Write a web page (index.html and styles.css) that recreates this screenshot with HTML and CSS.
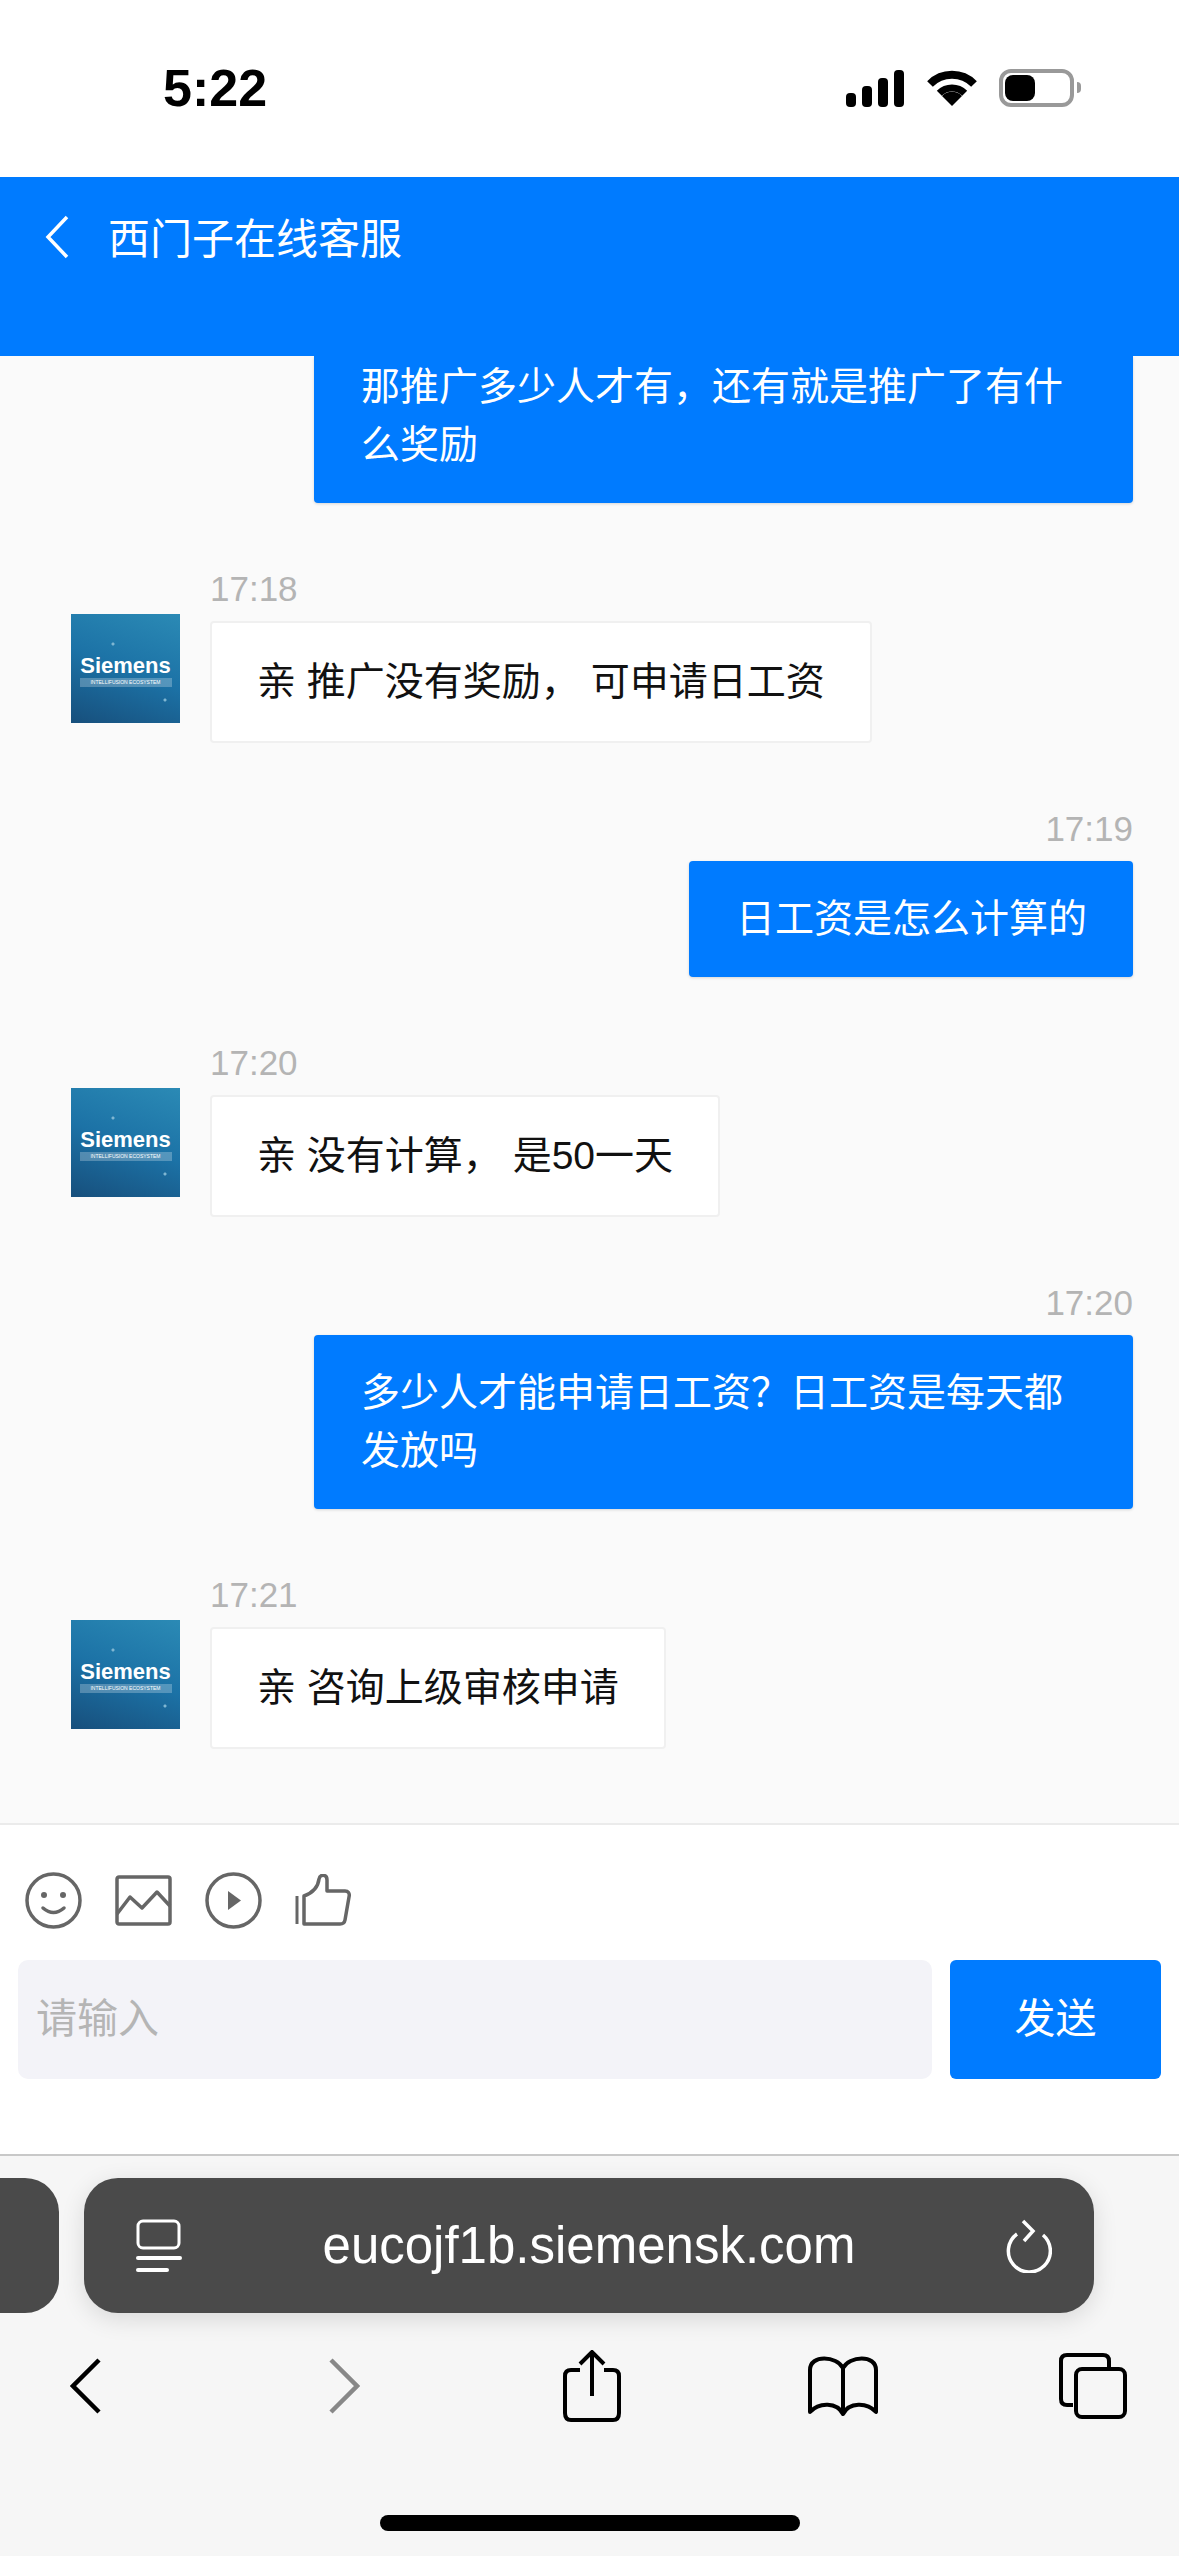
FILE: index.html
```html
<!DOCTYPE html>
<html lang="zh-CN">
<head>
  <meta charset="UTF-8" />
  <meta name="viewport" content="width=device-width, initial-scale=1.0"/>
  <title>西门子在线客服</title>
  <link rel="stylesheet" href="styles.css">
</head>
<body>
  <div class="status-bar">
    <span class="status-time">5:22</span>
    <div class="status-icons">
      <div class="signal">
        <i class="bar-1"></i><i class="bar-2"></i><i class="bar-3"></i><i class="bar-4"></i>
      </div>
      <svg class="wifi" width="50" height="38" viewBox="0 0 50 38">
        <path d="M3 15A31 31 0 0 1 47 15" fill="none" stroke="#000" stroke-width="8"/>
        <path d="M12.3 24.3A18 18 0 0 1 37.7 24.3" fill="none" stroke="#000" stroke-width="7"/>
        <path d="M25 37L15 27A14 14 0 0 1 35 27Z" fill="#000"/>
      </svg>
      <div class="battery"><div class="battery-fill"></div></div>
      <div class="battery-nub"></div>
    </div>
  </div>

  <header class="chat-header">
    <svg class="header-back" width="26" height="44" viewBox="0 0 26 44">
      <path d="M23 2L4 22L23 42" fill="none" stroke="#fff" stroke-width="3.5"/>
    </svg>
    <span class="header-title">西门子在线客服</span>
  </header>

  <main class="messages">
    <div class="msg-right">
      <div class="bubble bubble-me bubble-first">那推广多少人才有，还有就是推广了有什么奖励</div>
    </div>

    <div class="msg-left">
      <div class="avatar"><span class="avatar-name">Siemens</span><span class="avatar-sub">INTELLIFUSION ECOSYSTEM</span></div>
      <div class="msg-body">
        <div class="msg-time">17:18</div>
        <div class="bubble bubble-them">亲 推广没有奖励， 可申请日工资</div>
      </div>
    </div>

    <div class="msg-right">
      <div class="msg-time">17:19</div>
      <div class="bubble bubble-me">日工资是怎么计算的</div>
    </div>

    <div class="msg-left">
      <div class="avatar"><span class="avatar-name">Siemens</span><span class="avatar-sub">INTELLIFUSION ECOSYSTEM</span></div>
      <div class="msg-body">
        <div class="msg-time">17:20</div>
        <div class="bubble bubble-them">亲 没有计算， 是50一天</div>
      </div>
    </div>

    <div class="msg-right">
      <div class="msg-time">17:20</div>
      <div class="bubble bubble-me">多少人才能申请日工资？日工资是每天都发放吗</div>
    </div>

    <div class="msg-left">
      <div class="avatar"><span class="avatar-name">Siemens</span><span class="avatar-sub">INTELLIFUSION ECOSYSTEM</span></div>
      <div class="msg-body">
        <div class="msg-time">17:21</div>
        <div class="bubble bubble-them">亲 咨询上级审核申请</div>
      </div>
    </div>
  </main>

  <section class="composer">
    <div class="tools">
      <svg width="57" height="57" viewBox="0 0 57 57" fill="none" stroke="#666" stroke-width="3.5">
        <circle cx="28.5" cy="28.5" r="26.5"/>
        <circle cx="19" cy="23" r="3" fill="#666" stroke="none"/>
        <circle cx="38" cy="23" r="3" fill="#666" stroke="none"/>
        <path d="M18 36Q28.5 45 39 36" stroke-linecap="round"/>
      </svg>
      <svg width="57" height="51" viewBox="0 0 57 51" fill="none" stroke="#666" stroke-width="3.5" stroke-linejoin="round">
        <rect x="2" y="2" width="53" height="47" rx="2"/>
        <path d="M2 39L15 22L27 33L42 17L55 31"/>
      </svg>
      <svg width="57" height="57" viewBox="0 0 57 57" fill="none" stroke="#666" stroke-width="3.5">
        <circle cx="28.5" cy="28.5" r="26.5"/>
        <path d="M23 19L36 28.5L23 38Z" fill="#666" stroke="none"/>
      </svg>
      <svg width="56" height="52" viewBox="0 0 56 52" fill="none" stroke="#666" stroke-width="3.5" stroke-linejoin="round">
        <path d="M2 22V50" stroke-width="3"/>
        <path d="M9 22C17 19 23 14 24 5C25 0 32 0 32 6V17H50C53 17 55 19 54 23L50 46C49.500 49 48 50 45 50H9Z"/>
      </svg>
    </div>
    <div class="input-row">
      <div class="fake-input">请输入</div>
      <div class="send-btn">发送</div>
    </div>
  </section>

  <footer class="browser">
    <div class="url-row">
      <div class="prev-tab"></div>
      <div class="url-pill">
        <svg width="46" height="54" viewBox="0 0 46 54" fill="none" stroke="#fff">
          <rect x="2" y="2" width="41" height="27" rx="5" stroke-width="3"/>
          <path d="M2 39H44" stroke-width="4" stroke-linecap="round"/>
          <path d="M2 51H31" stroke-width="4" stroke-linecap="round"/>
        </svg>
        <span class="url-text">eucojf1b.siemensk.com</span>
        <svg width="48" height="54" viewBox="0 0 48 54" fill="none" stroke="#fff" stroke-width="3.5">
          <path d="M13 15A21 21 0 1 0 39 16"/>
          <path d="M19 2L29 12L20 22"/>
        </svg>
      </div>
    </div>
    <nav class="browser-nav">
      <svg width="32" height="56" viewBox="0 0 32 56" fill="none" stroke="#000" stroke-width="4.500">
        <path d="M29 2L3 28L29 54"/>
      </svg>
      <svg class="nav-forward" width="32" height="56" viewBox="0 0 32 56" fill="none" stroke="#888" stroke-width="4.500">
        <path d="M3 2L29 28L3 54"/>
      </svg>
      <svg class="nav-share" width="58" height="72" viewBox="0 0 58 72" fill="none" stroke="#000" stroke-width="4">
        <path d="M17 20H8C4 20 2 22 2 26V63C2 68 4 70 8 70H50C54 70 56 68 56 63V26C56 22 54 20 50 20H41"/>
        <path d="M29 46V3M17 14L29 2L41 14"/>
      </svg>
      <svg class="nav-book" width="72" height="60" viewBox="0 0 72 60" fill="none" stroke="#000" stroke-width="4" stroke-linejoin="round">
        <path d="M36 12C30 0 3 -2 3 14V56C12 46 30 46 36 58C42 46 60 46 69 56V14C69 -2 42 0 36 12V58"/>
      </svg>
      <svg class="nav-tabs" width="68" height="66" viewBox="0 0 68 66" fill="none" stroke="#000" stroke-width="4">
        <path d="M14 52H8C4 52 2 50 2 46V8C2 4 4 2 8 2H44C48 2 50 4 50 8V15"/>
        <rect x="17" y="16" width="49" height="48" rx="6"/>
      </svg>
    </nav>
    <div class="home-bar"></div>
  </footer>
</body>
</html>
```

FILE: styles.css
```css
* {
  box-sizing: border-box;
}
body {
  margin: 0;
  width: 1179px;
  height: 2556px;
  display: flex;
  flex-direction: column;
  overflow: hidden;
  background: #fff;
  font-family: "Liberation Sans", "Noto Sans CJK SC", sans-serif;
}

/* phone status bar */
.status-bar {
  height: 177px;
  flex: none;
  display: flex;
  justify-content: space-between;
  align-items: flex-start;
  padding: 58px 98px 0 163px;
}
.status-time {
  font-size: 52px;
  line-height: 60px;
  font-weight: bold;
  color: #000;
}
.status-icons {
  display: flex;
  align-items: flex-end;
  padding-top: 11px;
  height: 49px;
}
.signal {
  display: flex;
  align-items: flex-end;
  gap: 6px;
  margin-right: 23px;
}
.signal i {
  width: 10px;
  background: #000;
  border-radius: 4px;
}
.bar-1 { height: 14px; }
.bar-2 { height: 21px; }
.bar-3 { height: 29px; }
.bar-4 { height: 37px; }
.wifi {
  margin-right: 22px;
}
.battery {
  width: 75px;
  height: 38px;
  border: 4px solid #999;
  border-radius: 12px;
  padding: 2px;
}
.battery-fill {
  width: 30px;
  height: 100%;
  background: #000;
  border-radius: 8px;
}
.battery-nub {
  width: 4px;
  height: 11px;
  margin: 0 0 14px 3px;
  background: #999;
  border-radius: 0 4px 4px 0;
}

/* blue header */
.chat-header {
  height: 179px;
  flex: none;
  display: flex;
  align-items: flex-start;
  padding: 38px 0 0 44px;
  background: #007bff;
  color: #fff;
}
.header-back {
  margin-right: 38px;
}
.header-title {
  font-size: 42px;
  line-height: 50px;
}

/* messages */
.messages {
  height: 1467px;
  flex: none;
  padding: 0 46px 0 71px;
  background: #fafafa;
  overflow: hidden;
}
.msg-right {
  display: flex;
  flex-direction: column;
  align-items: flex-end;
  margin-top: 68px;
}
.msg-right:first-child {
  margin-top: 0;
}
.msg-left {
  display: flex;
  align-items: flex-start;
  gap: 30px;
  margin-top: 68px;
}
.msg-time {
  height: 50px;
  font-size: 35px;
  line-height: 36px;
  color: #b4b4b4;
}
.bubble {
  font-size: 39px;
  line-height: 58px;
  border-radius: 4px;
}
.bubble-me {
  max-width: 819px;
  padding: 29px 46px 29px 47px;
  background: #007bff;
  color: #fff;
  box-shadow: 0 1px 3px rgba(0,0,0,0.15);
}
.bubble-first {
  width: 819px;
  padding-top: 2px;
  border-radius: 0 0 4px 4px;
}
.bubble-them {
  display: inline-block;
  padding: 30px 45px;
  background: #fff;
  color: #111;
  border: 2px solid #f0f0f0;
}
.avatar {
  width: 109px;
  height: 109px;
  flex: none;
  margin-top: 43px;
  display: flex;
  flex-direction: column;
  align-items: center;
  padding-top: 40px;
  color: #fff;
  background:
    radial-gradient(circle at 42px 30px, #7fb6d2 0, #7fb6d2 1px, transparent 2px),
    radial-gradient(circle at 94px 86px, #7fb6d2 0, #7fb6d2 1px, transparent 2px),
    linear-gradient(200deg, #2b8ab5 0%, #1c72a6 50%, #174f7c 100%);
}
.avatar-name {
  font-size: 22px;
  line-height: 23px;
  font-weight: bold;
}
.avatar-sub {
  width: 92px;
  margin-top: 1px;
  font-family: "Liberation Sans Narrow", "Liberation Sans", sans-serif;
  font-size: 5px;
  line-height: 9px;
  white-space: nowrap;
  text-align: center;
  background: rgba(255,255,255,0.25);
}

/* input area */
.composer {
  height: 331px;
  flex: none;
  border-top: 2px solid #ebebeb;
  background: #fff;
  padding: 45px 18px 0;
}
.tools {
  display: flex;
  align-items: center;
  gap: 33px;
  height: 60px;
  padding-left: 7px;
}
.tools svg {
  flex: none;
}
.input-row {
  display: flex;
  gap: 18px;
  margin-top: 30px;
}
.fake-input {
  width: 914px;
  height: 119px;
  padding-left: 18px;
  line-height: 119px;
  font-size: 41px;
  color: #b5b5b5;
  background: #f3f3f8;
  border-radius: 10px;
}
.send-btn {
  width: 211px;
  height: 119px;
  line-height: 119px;
  text-align: center;
  font-size: 41px;
  color: #fff;
  background: #007bff;
  border-radius: 6px;
}

/* safari bottom bar */
.browser {
  height: 402px;
  flex: none;
  border-top: 2px solid #c8c8c8;
  background: #f6f6f6;
  padding-top: 22px;
}
.url-row {
  display: flex;
  gap: 25px;
}
.prev-tab {
  width: 59px;
  height: 135px;
  background: #4a4a4a;
  border-radius: 0 34px 34px 0;
}
.url-pill {
  width: 1010px;
  height: 135px;
  display: flex;
  align-items: center;
  justify-content: space-between;
  padding: 0 42px 0 52px;
  background: #4a4a4a;
  border-radius: 34px;
  box-shadow: 0 6px 24px rgba(0,0,0,0.12);
}
.url-text {
  font-size: 51px;
  margin-right: 8px;
  color: #fff;
}
.browser-nav {
  display: flex;
  align-items: center;
  height: 72px;
  margin: 37px 0 0 70px;
}
.nav-forward { margin-left: 226px; }
.nav-share { margin-left: 203px; }
.nav-book { margin-left: 186px; }
.nav-tabs { margin-left: 180px; }
.home-bar {
  width: 420px;
  height: 16px;
  margin: 93px auto 0;
  background: #000;
  border-radius: 8px;
}
```
